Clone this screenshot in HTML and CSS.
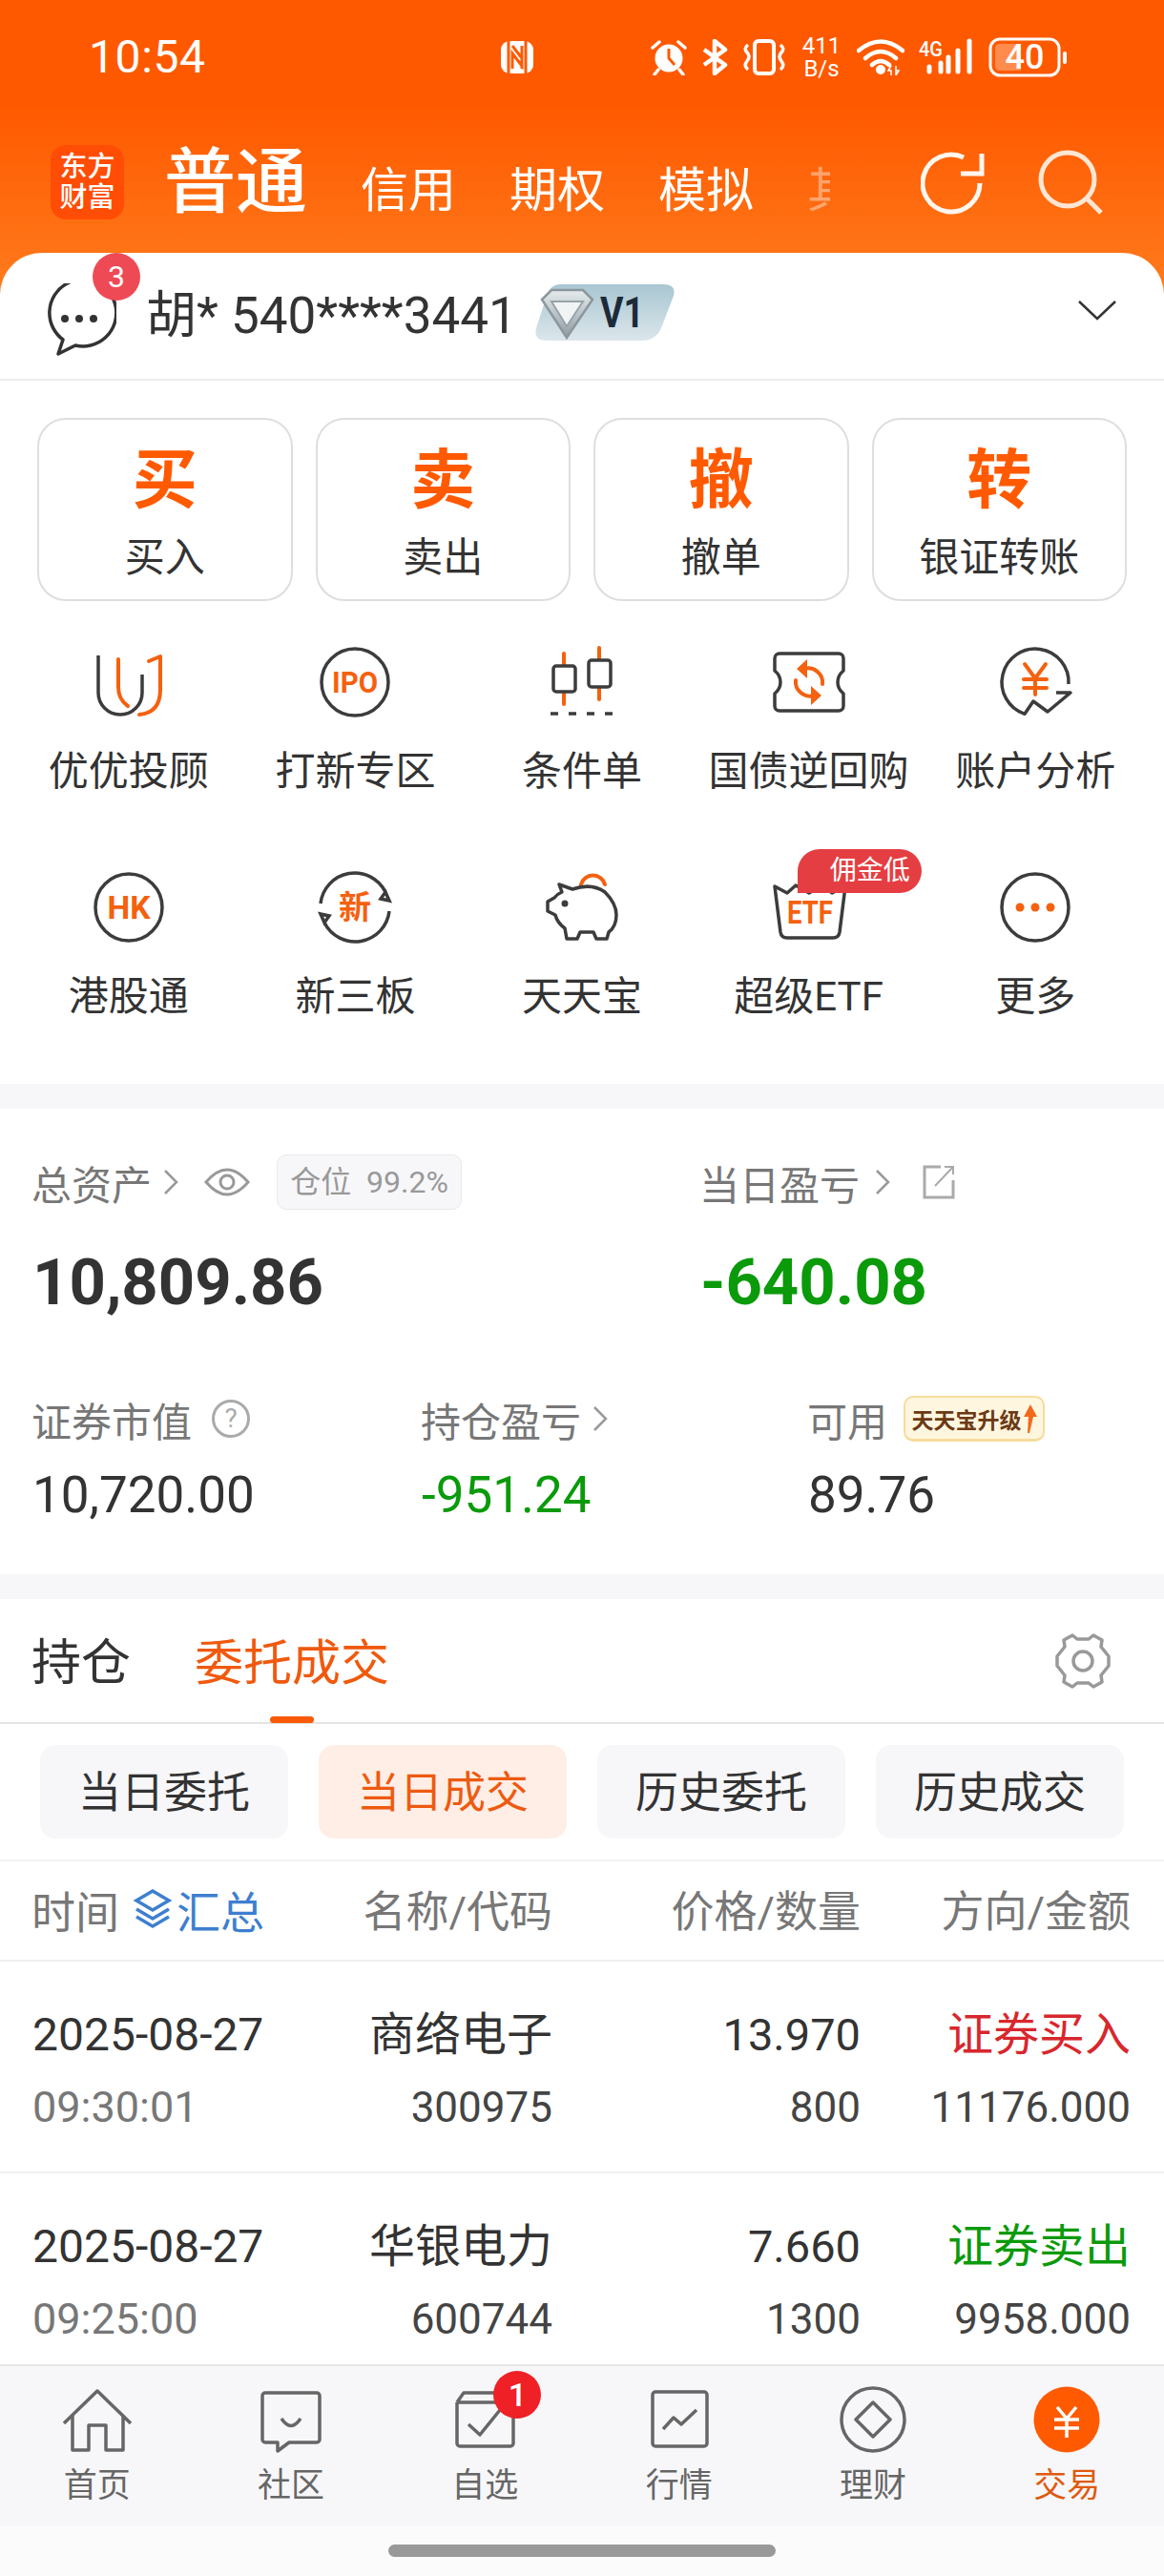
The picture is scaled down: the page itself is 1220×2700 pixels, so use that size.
FILE: index.html
```html
<!DOCTYPE html>
<html lang="zh-CN">
<head>
<meta charset="utf-8">
<title>交易</title>
<link rel="stylesheet" href="styles.css">
</head>
<body>
<div class="phone">
  <div class="top">
    <div class="status">
      <span class="clock">10:54</span>
      <svg class="st-nfc" width="36" height="36" viewBox="0 0 36 36"><rect x="1" y="1" width="34" height="34" rx="9" fill="#fff"/><path d="M9 1V35M27 1V35" stroke="#ff5a00" stroke-width="3"/><path d="M13 6L23 19V30M13 30V14L23 27V6" stroke="#ff5a00" stroke-width="3" fill="none"/></svg>
      <div class="st-right">
        <svg width="38" height="38" viewBox="0 0 38 38"><circle cx="19" cy="20" r="14.5" fill="#fff"/><path d="M19 10V20L25 27" stroke="#ff5a00" stroke-width="3" fill="none"/><path d="M2 9L9 3M36 9L29 3M8 32L4 37M30 32L34 37" stroke="#fff" stroke-width="3.5" stroke-linecap="round"/></svg>
        <svg width="28" height="38" viewBox="0 0 28 38"><path d="M3 11L25 27L14 36V2L25 11L3 27" stroke="#fff" stroke-width="4.5" fill="none" stroke-linejoin="round"/></svg>
        <svg width="46" height="38" viewBox="0 0 46 38"><rect x="13" y="2" width="20" height="34" rx="4" fill="none" stroke="#fff" stroke-width="4"/><path d="M6 6Q1 10 5 14T5 23T6 32M40 6Q45 10 41 14T41 23T40 32" fill="none" stroke="#fff" stroke-width="3.5"/></svg>
        <div class="speed"><span>411</span><span>B/s</span></div>
        <svg width="50" height="38" viewBox="0 0 50 38"><path d="M2 12Q25 -7 48 12M9 20Q25 6 41 20M16 27Q25 19 34 27" fill="none" stroke="#fff" stroke-width="4.5" stroke-linecap="round"/><circle cx="25" cy="32" r="5" fill="#fff"/><path d="M36 28L33 33H36V38M41 28V38L44 33H41" stroke="#fff" stroke-width="1.5" fill="none"/></svg>
        <svg width="57" height="40" viewBox="0 0 57 40"><text class="st-4g" x="0" y="19" textLength="25" lengthAdjust="spacingAndGlyphs">4G</text><path d="M11 30V35M23 26V35M31 20V35M41 13V35M53 3V35" stroke="#fff" stroke-width="5" stroke-linecap="round"/></svg>
        <svg class="st-batt-ic" width="84" height="42" viewBox="0 0 84 42"><rect x="2" y="2" width="72" height="38" rx="10" fill="none" stroke="#fff" stroke-width="3"/><path d="M12 7H34V35H12Q7 35 7 30V12Q7 7 12 7Z" fill="#fff" opacity=".3"/><text class="st-batt" x="38" y="33" text-anchor="middle">40</text><rect x="78" y="15" width="4" height="13" rx="2" fill="#fff"/></svg>
      </div>
    </div>
    <div class="toolbar">
      <div class="logo"><span>东方</span><span>财富</span></div>
      <div class="acct-tabs">
        <span class="acct-on">普通</span>
        <span>信用</span>
        <span>期权</span>
        <span>模拟</span>
        <span class="acct-fade">其他</span>
      </div>
      <svg class="tb-refresh" width="68" height="68" viewBox="0 0 68 68"><path d="M62 34A30 30 0 1 1 45 7" fill="none" stroke="#fff6ee" stroke-width="5"/><path d="M64 3V24H42" fill="none" stroke="#fff6ee" stroke-width="5"/></svg>
      <svg class="tb-search" width="68" height="68" viewBox="0 0 68 68"><circle cx="31" cy="31" r="28" fill="none" stroke="#ffe6d4" stroke-width="5"/><path d="M51 51L66 66" stroke="#ffe6d4" stroke-width="5"/></svg>
    </div>
    <div class="account">
      <div class="chat">
        <svg width="76" height="76" viewBox="0 0 76 76"><path d="M20 59A35 35 0 1 1 33 65L15 74Z" fill="none" stroke="#333" stroke-width="3.500" stroke-linejoin="round"/><circle cx="22" cy="37" r="4" fill="#333"/><circle cx="37" cy="37" r="4" fill="#333"/><circle cx="52" cy="37" r="4" fill="#333"/></svg>
        <span class="chat-badge">3</span>
      </div>
      <span class="acct-name">胡* 540****3441</span>
      <svg class="vip" width="150" height="60" viewBox="0 0 150 60"><defs><linearGradient id="vg" x1="0" y1="0" x2="0" y2="1"><stop offset="0" stop-color="#a8c6d2"/><stop offset="1" stop-color="#dbe6ea"/></linearGradient><linearGradient id="vd" x1="0" y1="0" x2="0" y2="1"><stop offset="0" stop-color="#e6ecee"/><stop offset="1" stop-color="#8f9ba1"/></linearGradient></defs><path d="M28 0H136Q150 0 147 12L134 46Q128 59 114 59H14Q0 59 3 46L14 12Q18 0 28 0Z" fill="url(#vg)"/><path d="M9 16L19 6H52L62 16L35 56Z" fill="url(#vd)" stroke="#8b979c" stroke-width="2.500"/><path d="M19 18H52L35 44Z" fill="#f1f4f5" stroke="#98a4aa" stroke-width="2"/><text class="vip-t" x="70" y="45" textLength="46" lengthAdjust="spacingAndGlyphs">V1</text></svg>
      <svg class="chev" width="42" height="24" viewBox="0 0 42 24"><path d="M2 3L21 21L40 3" fill="none" stroke="#333" stroke-width="2.5"/></svg>
    </div>
  </div>

  <div class="main">
    <div class="panel">
      <div class="trade-btns">
        <div class="tbtn"><b>买</b><span>买入</span></div>
        <div class="tbtn"><b>卖</b><span>卖出</span></div>
        <div class="tbtn"><b>撤</b><span>撤单</span></div>
        <div class="tbtn"><b>转</b><span>银证转账</span></div>
      </div>
      <div class="grid">
        <div class="cell"><svg class="ic" viewBox="0 0 80 80"><path class="d" d="M8 12V51a23 23 0 0 0 46 0V32"/><path class="o" d="M29 16V45Q29 58 39 65M61 18L73 13V48Q73 72 51 74"/></svg><span>优优投顾</span></div>
        <div class="cell"><svg class="ic" viewBox="0 0 80 80"><circle class="d" cx="40" cy="40" r="35"/><text class="it" x="40" y="51" font-size="32" textLength="48" lengthAdjust="spacingAndGlyphs">IPO</text></svg><span>打新专区</span></div>
        <div class="cell"><svg class="ic" viewBox="0 0 80 80"><path class="o" d="M21 10V63M58 4V58"/><rect class="df" x="10" y="23" width="23" height="27" rx="3"/><rect class="df" x="47" y="17" width="23" height="28" rx="3"/><path class="d" d="M7 73H72" stroke-dasharray="8 11"/></svg><span>条件单</span></div>
        <div class="cell"><svg class="ic" viewBox="0 0 80 80"><path class="d" d="M9 10H71a5 5 0 0 1 5 5V28Q70 33 70 40Q70 47 76 52V65a5 5 0 0 1-5 5H9a5 5 0 0 1-5-5V52Q10 47 10 40Q10 33 4 28V15a5 5 0 0 1 5-5Z"/><path class="o" d="M54 42A15 15 0 0 0 35 26M26 38A15 15 0 0 0 45 54"/><path class="of" d="M38 16L38 36L27 26ZM42 64L42 44L53 54Z"/></svg><span>国债逆回购</span></div>
        <div class="cell"><svg class="ic" viewBox="0 0 80 80"><path class="d" d="M75 42A35 35 0 1 0 29 73.300L38 60L53 71L77 51H62"/><path class="o" d="M29 21L40 36L51 21M40 36V53M28 37H52M28 46H52"/></svg><span>账户分析</span></div>
        <div class="cell"><svg class="ic" viewBox="0 0 80 80"><circle class="d" cx="40" cy="40" r="35"/><text class="it" x="40" y="52" font-size="34" textLength="45" lengthAdjust="spacingAndGlyphs">HK</text></svg><span>港股通</span></div>
        <div class="cell"><svg class="ic" viewBox="0 0 80 80"><path class="d" d="M4 36A36 36 0 0 1 72 24M76 44A36 36 0 0 1 8 56"/><path class="df" d="M72 24L76 33L67 31ZM8 56L4 47L13 49Z"/><text class="it" x="40" y="52" font-size="34">新</text></svg><span>新三板</span></div>
        <div class="cell"><svg class="ic" viewBox="0 0 80 80"><path class="o" d="M39 16A13 13 0 0 1 64 16"/><path class="d" d="M16 16L30 21Q50 14 64 24Q76 36 76 48Q76 60 68 66L66 73H55L52 66H38L35 73H24L22 62Q14 56 12 48L4 44V34L11 30Q14 26 19 24Z"/><circle class="dot" cx="22" cy="36" r="3.500"/></svg><span>天天宝</span></div>
        <div class="cell"><svg class="ic" viewBox="0 0 80 80"><path class="d" d="M4 18L17 25L26 17L40 25L54 17L64 25L78 18L72 66Q71 72 65 72H17Q11 72 10 66Z"/><text class="it" x="41" y="57" font-size="34" textLength="48" lengthAdjust="spacingAndGlyphs">ETF</text></svg><span>超级ETF</span><div class="promo"><em>佣金低至</em></div></div>
        <div class="cell"><svg class="ic" viewBox="0 0 80 80"><circle class="d" cx="40" cy="40" r="35"/><circle class="odot" cx="24" cy="40" r="4.500"/><circle class="odot" cx="40" cy="40" r="4.500"/><circle class="odot" cx="56" cy="40" r="4.500"/></svg><span>更多</span></div>
      </div>
    </div>

    <div class="band"></div>

    <div class="assets">
      <div class="a-top">
        <div class="a-col">
          <div class="a-label"><span>总资产</span><svg class="tiny" width="16" height="30" viewBox="0 0 16 30"><path d="M2 3L14 15L2 27" fill="none" stroke="#999" stroke-width="2.500"/></svg>
            <svg class="eye" width="48" height="36" viewBox="0 0 48 36"><path d="M2 18Q24 -8 46 18Q24 44 2 18Z" fill="none" stroke="#999" stroke-width="3"/><circle cx="24" cy="18" r="7" fill="none" stroke="#999" stroke-width="3"/></svg>
            <span class="pill">仓位&nbsp;&nbsp;99.2%</span></div>
          <div class="a-big">10,809.86</div>
        </div>
        <div class="a-col">
          <div class="a-label"><span>当日盈亏</span><svg class="tiny tiny-wide" width="16" height="30" viewBox="0 0 16 30"><path d="M2 3L14 15L2 27" fill="none" stroke="#999" stroke-width="2.500"/></svg>
            <svg class="share" width="36" height="38" viewBox="0 0 36 38"><path d="M20 3H3V35H33V17" fill="none" stroke="#aaa" stroke-width="3"/><path d="M14 23L33 3M24 3H33V11" fill="none" stroke="#aaa" stroke-width="2"/></svg></div>
          <div class="a-big green">-640.08</div>
        </div>
      </div>
      <div class="a-bot">
        <div class="a-col">
          <div class="a-label"><span>证券市值</span><svg class="help" width="42" height="42" viewBox="0 0 42 42"><circle cx="21" cy="21" r="18.500" fill="none" stroke="#aaa" stroke-width="3"/><text class="help-t" x="21" y="30" text-anchor="middle">?</text></svg></div>
          <div class="a-mid">10,720.00</div>
        </div>
        <div class="a-col">
          <div class="a-label"><span>持仓盈亏</span><svg class="tiny" width="16" height="30" viewBox="0 0 16 30"><path d="M2 3L14 15L2 27" fill="none" stroke="#999" stroke-width="2.500"/></svg></div>
          <div class="a-mid green">-951.24</div>
        </div>
        <div class="a-col">
          <div class="a-label"><span>可用</span><span class="upgrade">天天宝升级<svg width="14" height="30" viewBox="0 0 14 30"><path d="M7 0L14 13H10L6 30H4L5 13H0Z" fill="#f2691c"/></svg></span></div>
          <div class="a-mid">89.76</div>
        </div>
      </div>
    </div>

    <div class="band"></div>

    <div class="tabs">
      <span class="tab">持仓</span>
      <span class="tab tab-on">委托成交</span>
      <svg class="gear" width="60" height="58" viewBox="0 0 60 58"><path d="M19 2L24 6H36L41 2L50 7L49 14L57 24V34L49 44L50 51L41 56L36 52H24L19 56L10 51L11 44L3 34V24L11 14L10 7Z" fill="none" stroke="#999" stroke-width="3.500" stroke-linejoin="round"/><circle cx="30" cy="29" r="10" fill="none" stroke="#999" stroke-width="3.500"/></svg>
    </div>
    <div class="subtabs">
      <span>当日委托</span><span class="sub-on">当日成交</span><span>历史委托</span><span>历史成交</span>
    </div>
    <div class="thead">
      <div class="th-time">时间<svg class="layers" width="42" height="42" viewBox="0 0 42 42"><path d="M21 2L38 12L21 22L4 12Z" fill="none" stroke="#3d7fcf" stroke-width="3.500"/><path d="M4 21L21 31L38 21M4 29L21 39L38 29" fill="none" stroke="#3d7fcf" stroke-width="3.500"/></svg><span class="blue">汇总</span></div>
      <div class="r">名称/代码</div>
      <div class="r">价格/数量</div>
      <div class="r">方向/金额</div>
    </div>
    <div class="trow">
      <div><div class="big">2025-08-27</div><div class="small">09:30:01</div></div>
      <div class="r"><div class="name">商络电子</div><div class="val">300975</div></div>
      <div class="r"><div class="price">13.970</div><div class="val">800</div></div>
      <div class="r"><div class="name red">证券买入</div><div class="val">11176.000</div></div>
    </div>
    <div class="trow">
      <div><div class="big">2025-08-27</div><div class="small">09:25:00</div></div>
      <div class="r"><div class="name">华银电力</div><div class="val">600744</div></div>
      <div class="r"><div class="price">7.660</div><div class="val">1300</div></div>
      <div class="r"><div class="name green">证券卖出</div><div class="val">9958.000</div></div>
    </div>
  </div>

  <nav class="nav">
    <div class="nitem"><svg class="nic" viewBox="0 0 72 72"><path d="M1 40L36 6L71 40M10 31V68H27V42H45V68H63V31"/></svg><span>首页</span></div>
    <div class="nitem"><svg class="nic" viewBox="0 0 72 72"><path d="M6 11a3 3 0 0 1 3-3H63a3 3 0 0 1 3 3V57a3 3 0 0 1-3 3H34L22 69V60H9a3 3 0 0 1-3-3Z"/><path d="M26 35Q36 50 46 35"/></svg><span>社区</span></div>
    <div class="nitem"><svg class="nic" viewBox="0 0 72 72"><path d="M7 18L14 8H60M7 18H66M7 18V61a3 3 0 0 0 3 3H63a3 3 0 0 0 3-3V18"/><path d="M19 41L31 52L52 26"/></svg><span>自选</span><i class="nbadge">1</i></div>
    <div class="nitem"><svg class="nic" viewBox="0 0 72 72"><path d="M11 7H62a3 3 0 0 1 3 3V61a3 3 0 0 1-3 3H11a3 3 0 0 1-3-3V10a3 3 0 0 1 3-3Z"/><path d="M19 46L30 34L38 41L54 26"/></svg><span>行情</span></div>
    <div class="nitem"><svg class="nic" viewBox="0 0 72 72"><circle cx="36" cy="36" r="33"/><path d="M36 18L54 36L36 54L18 36Z"/></svg><span>理财</span></div>
    <div class="nitem ntrade"><svg class="nic nic-on" viewBox="0 0 72 72"><circle cx="36" cy="36" r="34.500"/><path d="M26 23L36 35L46 23M36 35V55M23 36H49M23 45H49"/></svg><span>交易</span></div>
  </nav>
  <div class="homebar"><i></i></div>
</div>
</body>
</html>
```

FILE: styles.css
```css
* { box-sizing: border-box; }
html, body { margin: 0; padding: 0; background: #fff; }
body { font-family: Roboto, "Noto Sans CJK SC", sans-serif; color: #333; }
.phone { width: 1220px; height: 2700px; display: flex; flex-direction: column; overflow: hidden; background: #fff; }

/* header */
.top { background: linear-gradient(#ff5900 0, #ff5900 110px, #ff7a1c 300px, #ff7a1c 400px); }
.status { height: 120px; display: flex; align-items: center; padding-left: 93px; color: #fff; }
.clock { font-size: 48px; width: 124px; letter-spacing: .6px; line-height: 1; }
.st-nfc { margin-left: 307px; }
.st-right { margin-left: 122px; display: flex; align-items: center; gap: 15px; }
.st-batt-ic { margin-left: 1px; }
.speed { width: 44px; display: flex; flex-direction: column; align-items: center; font-size: 24px; line-height: 24px; color: #fff; }
.st-4g { font-size: 22px; font-weight: 500; fill: #fff; }
.st-batt { font-size: 36px; font-weight: 500; fill: #fff; }

.toolbar { height: 145px; display: flex; align-items: flex-start; padding-left: 53px; }
.logo { width: 77px; height: 78px; margin-top: 32px; margin-right: 42px; border-radius: 16px; background: #ff4d05; color: #fff; display: flex; flex-direction: column; align-items: center; justify-content: center; font-size: 29px; line-height: 32px; font-weight: 500; }
.acct-tabs { width: 698px; height: 125px; flex: none; display: flex; align-items: baseline; overflow: hidden; gap: 56px; color: #fff; font-size: 50px; padding-top: 26px; line-height: 90px; white-space: nowrap; }
.acct-tabs span { flex: none; }
.acct-on { font-size: 75px; font-weight: 500; }
.acct-fade { opacity: .4; }
.tb-refresh { margin-left: 95px; margin-top: 38px; flex: none; }
.tb-search { margin-left: 55px; margin-top: 37px; flex: none; }

.account { height: 134px; background: #fff; border-radius: 44px 44px 0 0; border-bottom: 2px solid #eee; display: flex; align-items: center; padding-left: 46px; position: relative; }
.chat { position: relative; width: 76px; height: 76px; margin-top: 8px; }
.chat svg { display: block; }
.chat-badge { position: absolute; left: 51px; top: -32px; width: 50px; height: 50px; border-radius: 50%; background: #ee4a55; color: #fff; font-size: 32px; line-height: 50px; text-align: center; }
.acct-name { margin-left: 31px; font-size: 53px; line-height: 60px; color: #333; }
.vip { margin-left: 17px; margin-top: -6px; flex: none; }
.vip-t { font-size: 44px; font-weight: 700; fill: #1c2b39; }
.chev { margin-left: auto; margin-right: 49px; margin-top: -12px; }

/* content */
.main { flex: 1; min-height: 0; overflow: hidden; }
.panel { background: #fff; }
.trade-btns { display: grid; grid-template-columns: repeat(4, 1fr); gap: 24px; padding: 39px 39px 0; }
.tbtn { height: 192px; border: 2px solid #dedede; border-radius: 30px; display: flex; flex-direction: column; align-items: center; padding-top: 24px; }
.tbtn b { font-size: 68px; line-height: 80px; color: #ff5a00; font-weight: 700; }
.tbtn span { font-size: 42px; line-height: 48px; margin-top: 17px; color: #333; }

.grid { display: grid; grid-template-columns: repeat(5, 1fr); row-gap: 78px; padding: 45px 16px 67px; }
.cell { position: relative; display: flex; flex-direction: column; align-items: center; font-size: 42px; line-height: 48px; color: #333; }
.cell span { margin-top: 30px; white-space: nowrap; }
.ic { width: 80px; height: 80px; display: block; }
.d { fill: none; stroke: #3c3c3c; stroke-width: 3.500; stroke-linejoin: round; }
.df { fill: #fff; stroke: #3c3c3c; stroke-width: 3.500; }
.o { fill: none; stroke: #f4610f; stroke-width: 4; stroke-linecap: round; stroke-linejoin: round; }
.of { fill: #f4610f; }
.odot { fill: #f4610f; }
.dot { fill: #3c3c3c; }
.it { fill: #f4610f; font-weight: 700; text-anchor: middle; }
.promo { position: absolute; left: 107px; top: -21px; width: 130px; height: 46px; border-radius: 23px 23px 23px 0; background: #e53e42; color: #fff; overflow: hidden; padding: 0 13px 0 34px; }
.promo em { display: block; width: 83px; overflow: hidden; white-space: nowrap; font-style: normal; font-size: 28px; line-height: 46px; }

.band { height: 26px; background: #f7f7f9; }

.assets { background: #fff; padding: 47px 0 50px 33px; }
.a-top { display: grid; grid-template-columns: 700px 1fr; }
.a-bot { display: grid; grid-template-columns: 408px 405px 1fr; margin-top: 73px; }
.a-label { height: 60px; display: flex; align-items: center; font-size: 42px; color: #777; }
.tiny { margin-left: 12px; }
.tiny-wide { margin-left: 16px; }
.eye { margin-left: 27px; }
.pill { margin-left: 28px; width: 194px; height: 58px; border: 1px solid #eaeaee; border-radius: 10px; background: #f7f7f9; color: #999; font-size: 32px; line-height: 56px; text-align: center; white-space: nowrap; }
.share { margin-left: 33px; }
.help { margin-left: 20px; }
.help-t { font-size: 28px; fill: #aaa; }
.a-big { margin-top: 35px; padding-left: 1px; font-size: 67px; line-height: 80px; font-weight: 700; color: #333; }
.a-mid { margin-top: 17px; padding-left: 1px; font-size: 53px; line-height: 66px; color: #333; }
.green { color: #0a9a0a; }
.red { color: #d8272d; }
.upgrade { margin-left: 17px; width: 148px; height: 48px; border: 2px solid #f6dc9c; border-bottom-width: 3px; border-radius: 10px; background: #fff6df; color: #6b3a14; font-size: 23px; font-weight: 700; display: flex; align-items: center; justify-content: center; gap: 2px; white-space: nowrap; }
.upgrade svg { flex: none; }

.tabs { height: 131px; border-bottom: 2px solid #e4e4e4; display: flex; align-items: center; padding: 0 55px 0 33px; }
.tab { font-size: 52px; line-height: 60px; color: #333; position: relative; height: 100%; display: flex; align-items: center; padding-top: 6px; }
.tab-on { margin-left: 67px; font-size: 51px; color: #f0590e; }
.tab-on::after { content: ""; position: absolute; left: 79px; bottom: -1px; width: 46px; height: 7px; border-radius: 4px; background: #f85a05; }
.gear { margin-left: auto; }

.subtabs { display: grid; grid-template-columns: repeat(4, 1fr); gap: 32px; padding: 22px 42px; border-bottom: 2px solid #f3f3f3; }
.subtabs span { height: 98px; background: #f7f7f9; border-radius: 16px; font-size: 45px; line-height: 102px; text-align: center; color: #333; }
.subtabs .sub-on { background: #ffeee6; color: #ee5a10; }

.thead, .trow { display: grid; grid-template-columns: 302px 244px 323px 283px; padding: 0 35px 0 33px; }
.thead { height: 105px; align-items: center; border-bottom: 2px solid #f0f0f0; font-size: 46px; color: #777; padding-bottom: 4px; }
.thead .r { font-size: 45px; }
.th-time { display: flex; align-items: center; }
.layers { margin-left: 14px; margin-right: 4px; }
.blue { color: #3d7fcf; }
.r { text-align: right; }
.trow { height: 222px; padding-top: 47px; border-bottom: 2px solid #f0f0f0; }
.big { font-size: 48px; line-height: 60px; color: #333; padding-left: 1px; }
.price { font-size: 47px; line-height: 60px; color: #333; }
.small { margin-top: 16px; padding-left: 1px; font-size: 45px; line-height: 60px; color: #777; }
.name { font-size: 48px; line-height: 60px; }
.val { margin-top: 16px; font-size: 44px; line-height: 60px; color: #444; }

/* nav */
.nav { height: 170px; background: #f7f7f9; border-top: 2px solid #e6e6e6; display: grid; grid-template-columns: repeat(6, 1fr); padding-top: 20px; }
.nitem { position: relative; display: flex; flex-direction: column; align-items: center; font-size: 35px; line-height: 40px; color: #666; }
.nitem span { margin-top: 14px; }
.nic { width: 72px; height: 72px; display: block; }
.nic path, .nic circle { fill: none; stroke: #666; stroke-width: 3.500; stroke-linejoin: round; }
.nic-on circle { fill: #ff5a00; stroke: none; }
.nic-on path { stroke: #fff; }
.ntrade { color: #e05a10; }
.nbadge { position: absolute; left: 50%; margin-left: 9px; top: -15px; width: 50px; height: 50px; border-radius: 50%; background: #ef2026; color: #fff; font-style: normal; font-size: 34px; line-height: 50px; text-align: center; font-weight: 500; }

.homebar { height: 52px; background: #fbfbfb; padding-top: 19px; display: flex; justify-content: center; }
.homebar i { width: 406px; height: 13px; border-radius: 7px; background: #999; display: block; }
```
